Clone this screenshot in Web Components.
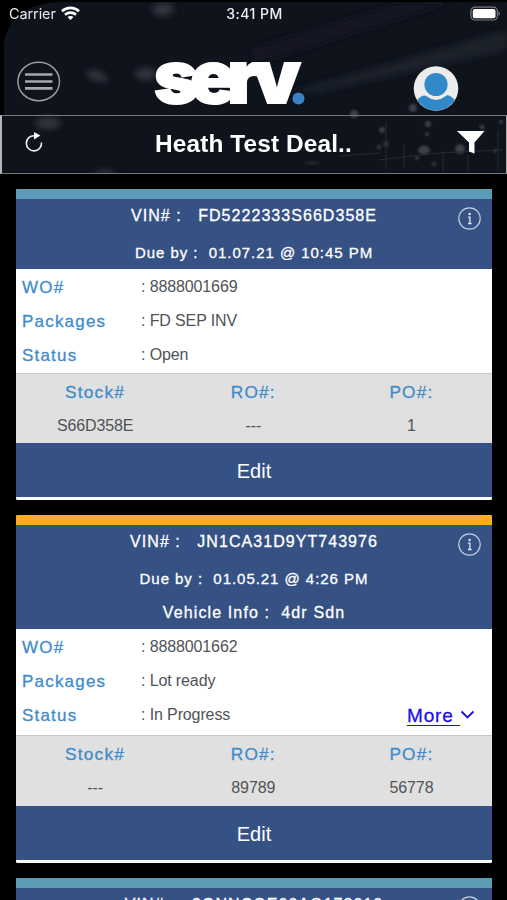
<!DOCTYPE html>
<html lang="en">
<head>
<meta charset="utf-8">
<title>serv</title>
<style>
html, body { margin: 0; background: #000; }
body { width: 507px; height: 900px; overflow: hidden; font-family: "Liberation Sans", Arial, sans-serif; }
</style>
</head>
<body>
<serv-app></serv-app>
<script>
const define = (name, html) => customElements.define(name, class extends HTMLElement {
  constructor() {
    super();
    this.attachShadow({ mode: 'open' });
  }
  connectedCallback() {
    if (this.shadowRoot.childNodes.length) return;
    const t = document.createElement('template');
    t.innerHTML = typeof html === 'function' ? html(this) : html;
    this.shadowRoot.append(t.content.cloneNode(true));
  }
});

define('status-bar', `
<style>
:host { display: grid; grid-template-columns: 1fr auto 1fr; align-items: center; height: 27px; padding: 0 7px 0 9px; color: #fff; font: 14.5px/27px Inter, "Liberation Sans", sans-serif; }
.left { display: flex; align-items: center; gap: 5px; color: #e3e5e7; letter-spacing: -.1px; }
.time { font-weight: 500; font-size: 14px; letter-spacing: .45px; color: #eef0f2; }
.right { display: flex; justify-content: flex-end; }
svg { display: block; }
</style>
<div class="left"><span>Carrier</span>
<svg width="19" height="15" viewBox="0 0 19 15" fill="none" stroke="#fff" stroke-width="2.6"><path d="M1 5.2C5.8.8 13.2.8 18 5.2"/><path d="M4 8.7c3.2-2.8 7.8-2.8 11 0"/><path d="M6.5 11.1c1.8-1.4 4.2-1.4 6 0L9.5 14z" fill="#fff" stroke="none"/></svg></div>
<div class="time">3:41 PM</div>
<div class="right"><svg width="30" height="16" viewBox="0 0 30 16"><rect x=".9" y="1.2" width="26.5" height="12.8" rx="4" fill="#14171c" stroke="#777a7e" stroke-width="1.2"/><rect x="2.8" y="3" width="22.7" height="9.2" rx="2" fill="#fff"/><path d="M28.5 5.2q3 2.4 0 4.8z" fill="#777a7e"/></svg></div>
`);

define('brand-bar', `
<style>
:host { display: grid; grid-template-columns: 153px 1fr 94px; height: 88px; }
svg { display: block; }
.menu { padding: 33px 0 0 16px; }
.logo { padding-top: 3px; }
.user { padding-top: 38px; }
text { font-family: Inter, "Liberation Sans", sans-serif; font-weight: 900; }
</style>
<div class="menu"><svg width="46" height="44" viewBox="0 0 46 44" fill="none"><ellipse cx="22.7" cy="21.5" rx="20.8" ry="19.2" stroke="#9b9ca3" stroke-width="1.5"/><path d="M9 14.5h27.5M9 21.5h27.5M9 28.4h27.5" stroke="#a8a8ad" stroke-width="2.7"/></svg></div>
<div class="logo"><svg width="160" height="85" viewBox="0 0 160 85"><text transform="translate(1 73) scale(1.04 1)" y="0" font-size="73" textLength="141" lengthAdjust="spacing" fill="#fff" stroke="#fff" stroke-width="2">serv</text><circle cx="145.500" cy="68.500" r="7.800" fill="#0f131c"/><circle cx="145.500" cy="68.500" r="6" fill="#3b82c9"/></svg></div>
<div class="user"><svg width="48" height="48" viewBox="0 0 48 48"><defs><clipPath id="c"><circle cx="23" cy="23.5" r="22"/></clipPath></defs><circle cx="23" cy="23.5" r="22.3" fill="#ececec"/><g clip-path="url(#c)"><path d="M2 46V38q3-5 7-7 3-1.300 5 .5 9 7 18 0 2-2 5-.5 4 2 7 7v8z" fill="#3189ca"/></g><circle cx="23" cy="19.500" r="11.600" fill="#3189ca"/></svg></div>
`);

define('dealer-bar', `
<style>
:host { display: grid; grid-template-columns: 80px 1fr 80px; align-items: center; box-sizing: border-box; height: 59px; border: 1px solid #74777c; border-left: 2px solid #b5b5b5; border-right: 1.500px solid #aaa; color: #fff; }
h1 { margin: 0; text-align: center; font: bold 24.400px/30px "Liberation Sans", sans-serif; padding: 0 1px 2px 0; letter-spacing: .12px; }
svg { display: block; }
</style>
<svg width="50" height="40" viewBox="0 0 50 40"><path d="M32.500 10.700A7.600 7.600 0 1 0 39.500 17.500" fill="none" stroke="#eee" stroke-width="1.600"/><path d="M32 7l6.400 3.500-6.400 4z" fill="#fff"/></svg>
<h1><slot></slot></h1>
<svg width="60" height="40" viewBox="0 0 60 40"><path d="M31 6H58.500L48.500 17.500V28.500l-5.500-2V17.500z" fill="#fff"/></svg>
`);

define('app-header', `
<style>
:host { display: grid; height: 174px; background: #0f131c; overflow: hidden; }
.art, .content { grid-area: 1 / 1; }
.art { display: block; }
</style>
<svg class="art" width="507" height="174" viewBox="0 0 507 174">
<defs><filter id="b" x="-50%" y="-50%" width="200%" height="200%"><feGaussianBlur stdDeviation="3"/></filter><filter id="s"><feGaussianBlur stdDeviation=".8"/></filter></defs>
<g filter="url(#b)"><path d="M290 92L507 30v20L320 92z" fill="#1b212b"/><path d="M253 48L400 3h50L253 65z" fill="#141922"/>
<g fill="#30343e"><ellipse cx="163" cy="9" rx="11" ry="7"/><ellipse cx="97" cy="76" rx="11" ry="5" transform="rotate(20 97 76)"/><ellipse cx="146" cy="74" rx="11" ry="6"/><ellipse cx="48" cy="123" rx="13" ry="6"/><ellipse cx="105" cy="173" rx="10" ry="3"/></g></g>
<g filter="url(#s)" fill="#3b3f48"><circle cx="354" cy="114" r="4"/><circle cx="413" cy="108" r="4"/><circle cx="428" cy="124" r="3"/><circle cx="427" cy="134" r="2"/><circle cx="382" cy="130" r="3"/><circle cx="386" cy="144" r="2.500"/><circle cx="379" cy="147" r="2"/><ellipse cx="424" cy="150" rx="6" ry="4.500"/><circle cx="482" cy="127" r="2.500"/><circle cx="460" cy="149" r="5"/><circle cx="434" cy="164" r="2"/><circle cx="417" cy="158" r="2"/><circle cx="495" cy="151" r="2"/><circle cx="501" cy="122" r="2"/><ellipse cx="312" cy="163" rx="8" ry="1.500" opacity=".5"/></g>
<path d="M386 122v47M404 145v22M443 151v20M468 155v15M498 130v40M378 160l60-7 65-3M340 156l40-3" stroke="#262a33" fill="none"/>
<path d="M0 0H507V2H60C25 2 4 24 4 47V115H0z" fill="#000"/>
</svg>
<div class="content"><slot></slot></div>
`);

define('card-field', `
<style>
:host { display: grid; grid-template-columns: 119px 1fr auto; align-items: center; height: 34.200px; }
.l { font-size: 17px; letter-spacing: 1.200px; color: #428bca; -webkit-text-stroke: .3px #428bca; padding-top: 1px; }
.v { font-size: 16px; letter-spacing: -.12px; color: #505356; }
</style>
<span class="l"><slot name="label"></slot></span><span class="v">: <slot></slot></span><slot name="extra"></slot>
`);

define('more-link', `
<style>
:host { display: flex; color: #1d10ee; padding-right: 12px; }
a { font-size: 19px; letter-spacing: .9px; text-decoration: underline; text-decoration-thickness: 1.300px; text-underline-offset: 2.500px; white-space: pre; -webkit-text-stroke: .3px #1d10ee; padding-top: 1px; }
svg { display: block; margin-top: 3px; }
</style>
<a><slot></slot> </a><svg width="15" height="16" viewBox="0 0 15 16"><path d="M1.500 4.500l6 6 6-6" fill="none" stroke="#1d10ee" stroke-width="1.900"/></svg>
`);

define('ref-column', `
<style>
:host { display: flex; flex-direction: column; align-items: center; }
.l { font-size: 17.300px; line-height: 20px; letter-spacing: 1.200px; color: #428bca; -webkit-text-stroke: .3px #428bca; }
.v { font-size: 16px; line-height: 20px; margin-top: 13.500px; letter-spacing: -.12px; color: #505356; }
</style>
<span class="l"><slot name="label"></slot></span><span class="v"><slot></slot></span>
`);

define('work-card', el => `
<style>
:host { display: block; border-radius: 2px; overflow: hidden; background: #fff; }
.bar { height: 10px; background: ${el.getAttribute('tone')}; }
header { display: grid; grid-template-columns: 44px 1fr 44px; height: ${el.getAttribute('head')}px; background: #365284; color: #fff; }
.lines { display: flex; flex-direction: column; align-items: center; grid-column: 2; padding-top: 7px; white-space: pre; line-height: 20px; -webkit-text-stroke: .3px #fff; }
.vin { font-size: 16px; letter-spacing: 1.050px; }
::slotted([slot=due]) { margin-top: 17px; font-size: 15px; letter-spacing: .960px; }
::slotted([slot=info]) { margin-top: 14px; font-size: 16px; letter-spacing: 1.130px; }
.info { display: block; margin: 7px 0 0 9px; }
.body { box-sizing: border-box; height: ${el.getAttribute('body')}px; padding: 1px 5px 0 6px; }
.refs { display: grid; grid-template-columns: repeat(3, 158.200px); box-sizing: border-box; height: ${el.getAttribute('refs') || 70}px; padding-top: 8px; background: #e0e0e0; border-top: 1px solid #c8c8c8; }
.edit { display: block; width: 100%; height: 54px; border: 0; padding: 2px 0 0; background: #365284; color: #fff; font: 20px/52px "Liberation Sans", sans-serif; text-align: center; box-sizing: border-box; }
.end { height: 3px; background: #f8f9fb; }
</style>
<div class="bar"></div>
<header><div class="lines"><span class="vin"><slot name="vin"></slot></span><slot name="due"></slot><slot name="info"></slot></div>
<svg class="info" width="26" height="26" viewBox="0 0 26 26"><circle cx="12.500" cy="12.500" r="10.700" fill="none" stroke="#c3cee2" stroke-width="1.200"/><circle cx="12.600" cy="8" r="1.200" fill="#dfe6f2"/><path d="M11 11.200h1.900v6.300M11 17.500h3.600" fill="none" stroke="#dfe6f2" stroke-width="1.300"/></svg></header>
<div class="body"><slot></slot></div>
<div class="refs"><slot name="ref"></slot></div>
<button class="edit">Edit</button>
<div class="end"></div>
`);

define('serv-app', `
<style>
:host { display: block; width: 507px; height: 900px; overflow: hidden; background: #000; }
main { display: flex; flex-direction: column; gap: 15px; padding: 15px 15px 0 16px; }
</style>
<app-header><status-bar></status-bar><brand-bar></brand-bar><dealer-bar>Heath Test Deal..</dealer-bar></app-header>
<main>
<work-card tone="#5a9bb6" head="70" body="104">
<span slot="vin">VIN# :&nbsp;&nbsp; FD5222333S66D358E</span><span slot="due">Due by :&nbsp; 01.07.21 @ 10:45 PM</span>
<card-field><span slot="label">WO#</span>8888001669</card-field><card-field><span slot="label">Packages</span>FD SEP INV</card-field><card-field><span slot="label">Status</span>Open</card-field>
<ref-column slot="ref"><span slot="label">Stock#</span>S66D358E</ref-column><ref-column slot="ref"><span slot="label">RO#:</span>---</ref-column><ref-column slot="ref"><span slot="label">PO#:</span>1</ref-column>
</work-card>
<work-card tone="#feab25" head="104" body="106" refs="71">
<span slot="vin">VIN# :&nbsp;&nbsp; JN1CA31D9YT743976</span><span slot="due">Due by :&nbsp; 01.05.21 @ 4:26 PM</span><span slot="info">Vehicle Info :&nbsp; 4dr Sdn</span>
<card-field><span slot="label">WO#</span>8888001662</card-field><card-field><span slot="label">Packages</span>Lot ready</card-field><card-field><span slot="label">Status</span>In Progress<more-link slot="extra">More</more-link></card-field>
<ref-column slot="ref"><span slot="label">Stock#</span>---</ref-column><ref-column slot="ref"><span slot="label">RO#:</span>89789</ref-column><ref-column slot="ref"><span slot="label">PO#:</span>56778</ref-column>
</work-card>
<work-card tone="#5a9bb6" head="70" body="104">
<span slot="vin">VIN# :&nbsp;&nbsp; 3GNNCGE00AG173010</span>
</work-card>
</main>
`);
</script>
</body>
</html>
